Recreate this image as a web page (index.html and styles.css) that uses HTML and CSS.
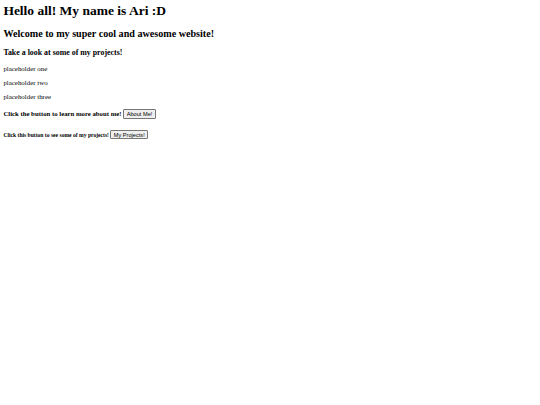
FILE: index.html
```html
<!DOCTYPE html>
<html lang="en">
<head>
<meta charset="utf-8">
<title>Ari</title>
<link rel="stylesheet" href="styles.css">
</head>
<body class="page">
  <h1 class="title">Hello all! My name is Ari :D</h1>
  <h2 class="subtitle">Welcome to my super cool and awesome website!</h2>
  <h3 class="section">Take a look at some of my projects!</h3>
  <p class="item">placeholder one</p>
  <p class="item">placeholder two</p>
  <p class="item">placeholder three</p>
  <h4 class="cta">Click the button to learn more about me! <button class="btn">About Me!</button></h4>
  <h5 class="cta-small">Click this button to see some of my projects! <button class="btn">My Projects!</button></h5>
</body>
</html>
```
FILE: styles.css
```css
html {
  background: #ffffff;
}

.page {
  margin: 3.375px;
  font-family: "Liberation Serif", "Times New Roman", serif;
  color: #000000;
}

.title {
  font-size: 13.5px;
  font-weight: bold;
  margin: 0 0 9.045px;
}

.subtitle {
  font-size: 10.125px;
  font-weight: bold;
  margin: 8.4px 0;
}

.section {
  font-size: 7.9px;
  font-weight: bold;
  margin: 7.9px 0;
}

.item {
  font-size: 6.9px;
  margin: 7.3px 0;
}

.cta {
  font-size: 6.75px;
  font-weight: bold;
  margin: 8.9px 0;
}

.cta-small {
  font-size: 5.6px;
  font-weight: bold;
  margin: 11px 0;
}

.btn {
  font-family: "Liberation Sans", Arial, sans-serif;
  font-size: 5.625px;
  font-weight: normal;
  color: #000000;
  background: #efefef;
  border: 0.85px solid #767676;
  border-radius: 1px;
  padding: 0.8px 2.5px;
  margin: 0;
}
```
